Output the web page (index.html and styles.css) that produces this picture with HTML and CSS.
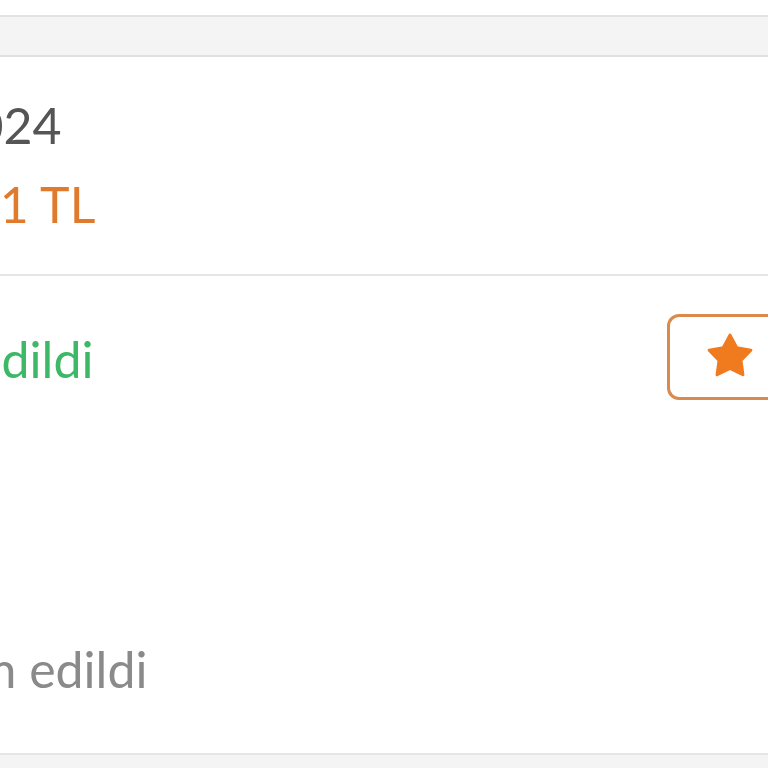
FILE: index.html
```html
<!DOCTYPE html>
<html lang="tr">
<head>
<meta charset="utf-8">
<link rel="stylesheet" href="styles.css">
</head>
<body>
<div class="page">
  <div class="gap-top"></div>
  <div class="band"></div>
  <section class="row info">
    <div class="line date">12.02.2024</div>
    <div class="line price">1.251 TL</div>
  </section>
  <section class="row status">
    <div class="status-head">
      <div class="line ok">Teslim edildi</div>
      <button class="fav" type="button" aria-label="Favori">
        <svg class="star" width="50" height="48" viewBox="-24 -23 48 46">
          <polygon points="0,-21 6.47,-8.9 19.97,-6.49 10.46,3.4 12.34,16.99 0,11 -12.34,16.99 -10.46,3.4 -19.97,-6.49 -6.47,-8.9" fill="#f07a1e" stroke="#f07a1e" stroke-width="3" stroke-linejoin="round"/>
        </svg>
      </button>
    </div>
    <div class="line muted">Teslim edildi</div>
  </section>
  <div class="band bottom"></div>
</div>
</body>
</html>
```
FILE: styles.css
```css
html, body {
  margin: 0;
  padding: 0;
  background: #ffffff;
  overflow: hidden;
  width: 768px;
  height: 768px;
}
.page {
  font-family: Lato, "Noto Sans", sans-serif;
  width: 768px;
}
.gap-top {
  height: 15px;
}
.band {
  height: 38px;
  background: #f4f4f4;
  border-top: 2px solid #e3e3e3;
  border-bottom: 2px solid #e0e0e0;
}
.band.bottom {
  height: 40px;
  border-bottom: none;
  border-top: 2px solid #e6e6e6;
}
.row {
  display: flex;
  flex-direction: column;
}
.info {
  padding: 38px 0 40px;
  gap: 19px;
  border-bottom: 2px solid #e6e6e6;
}
.line {
  font-size: 50px;
  line-height: 60px;
  white-space: nowrap;
}
.date {
  color: #555555;
  margin-left: -194px;
}
.price {
  color: #e07a2c;
  margin-left: -99px;
}
.status {
  padding-top: 38px;
  padding-bottom: 54px;
}
.status-head {
  display: flex;
  align-items: flex-start;
  justify-content: space-between;
}
.ok {
  color: #3db866;
  margin-top: 15px;
  margin-left: -174px;
}
.fav {
  box-sizing: border-box;
  width: 130px;
  height: 86px;
  margin-right: -29px;
  padding: 0 0 0 35px;
  border: 3px solid #d98a4c;
  border-radius: 12px;
  background: #ffffff;
  display: flex;
  align-items: center;
  justify-content: flex-start;
}
.star {
  display: block;
}
.muted {
  color: #8a8a8a;
  margin-top: 239px;
  margin-left: -120px;
}
```
